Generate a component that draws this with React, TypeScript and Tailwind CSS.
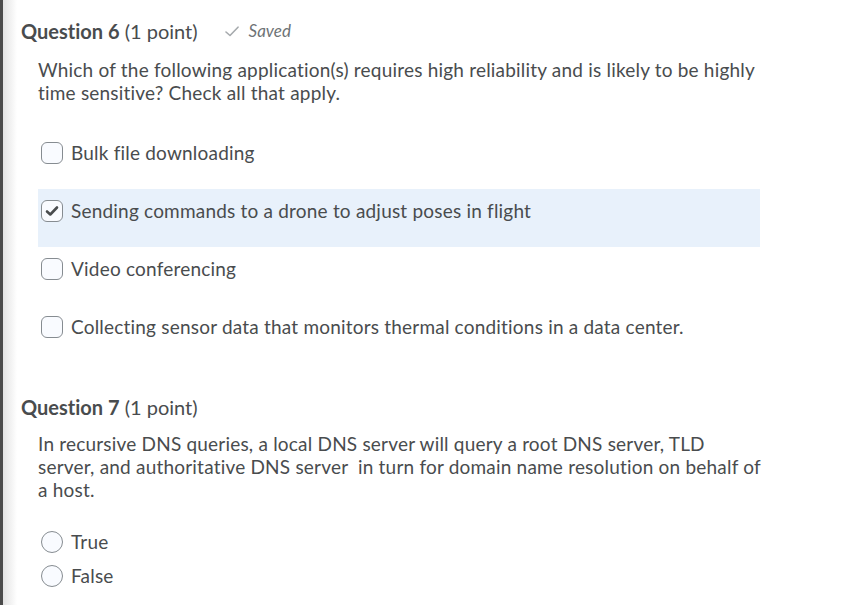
import React from "react";

const font = { fontFamily: "Lato, 'Noto Sans', sans-serif" };

function Checkbox({ checked }: { checked?: boolean }) {
  return (
    <div className="w-[22px] h-[22px] shrink-0 rounded-[6px] border border-[#868c91] bg-[#f9fbff] flex items-center justify-center">
      {checked && (
        <svg width="14" height="12" viewBox="0 0 14 12">
          <path d="M2 6.5 L5.3 9.5 L12 2.5" fill="none" stroke="#494c4e" strokeWidth="2.6" strokeLinecap="round" strokeLinejoin="round" />
        </svg>
      )}
    </div>
  );
}

function Radio() {
  return <div className="w-[22px] h-[22px] shrink-0 rounded-full border border-[#868c91] bg-[#f9fbff]" />;
}

function Option({ label, checked }: { label: string; checked?: boolean }) {
  return (
    <div className={`h-[58px] flex items-start gap-[8px] pl-[3px] pt-[11px] ${checked ? "bg-[#e8f1fb]" : ""}`}>
      <Checkbox checked={checked} />
      <span className="text-[19px] leading-[22px] tracking-[0.2px]">{label}</span>
    </div>
  );
}

export default function App() {
  return (
    <div className="w-[856px] h-[605px] flex overflow-hidden bg-white text-[#494c4e] [font-variant-ligatures:none]" style={font}>
      <div className="w-[3px] shrink-0 bg-[#4a4a4a]" />
      <div className="w-[14px] shrink-0 bg-gradient-to-r from-[#e2e2e2] to-white" />
      <div className="flex-1 flex flex-col pl-[4px] pt-[19px]">
        <div className="flex items-center h-[24px]">
          <span className="text-[20px] leading-[24px]">
            <span className="font-bold">Question 6</span> (1 point)
          </span>
          <span className="ml-[27px] flex items-center gap-[10px] text-[#6e7376]">
            <svg width="14" height="11" viewBox="0 0 14 11">
              <path d="M1 6 L5 9.5 L13 1.2" fill="none" stroke="#a6aaad" strokeWidth="1.6" strokeLinecap="round" strokeLinejoin="round" />
            </svg>
            <span className="italic text-[17px]">Saved</span>
          </span>
        </div>
        <div className="pl-[17px] flex flex-col">
          <p className="mt-[15px] text-[19px] leading-[23px] tracking-[0.2px] w-[726px]">
            Which of the following application(s) requires high reliability and is likely to be highly time sensitive? Check all that apply.
          </p>
          <div className="mt-[27px] w-[722px] flex flex-col">
            <Option label="Bulk file downloading" />
            <Option label="Sending commands to a drone to adjust poses in flight" checked />
            <Option label="Video conferencing" />
            <Option label="Collecting sensor data that monitors thermal conditions in a data center." />
          </div>
        </div>
        <div className="mt-[32px] flex items-center h-[24px]">
          <span className="text-[20px] leading-[24px]">
            <span className="font-bold">Question 7</span> (1 point)
          </span>
        </div>
        <div className="pl-[17px] flex flex-col">
          <p className="mt-[13px] text-[19px] leading-[23px] tracking-[0.2px] w-[726px]">
            In recursive DNS queries, a local DNS server will query a root DNS server, TLD server, and authoritative DNS server&nbsp; in turn for domain name resolution on behalf of a host.
          </p>
          <div className="mt-[30px] flex flex-col pl-[3px] gap-[12px]">
            <div className="flex items-center gap-[8px]">
              <Radio />
              <span className="text-[19px] leading-[22px] tracking-[0.2px]">True</span>
            </div>
            <div className="flex items-center gap-[8px]">
              <Radio />
              <span className="text-[19px] leading-[22px] tracking-[0.2px]">False</span>
            </div>
          </div>
        </div>
      </div>
    </div>
  );
}
